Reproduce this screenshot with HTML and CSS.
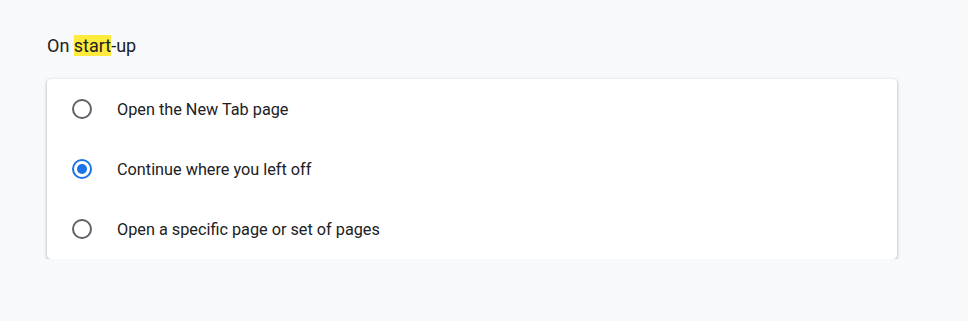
FILE: index.html
```html
<!DOCTYPE html>
<html>
<head>
<meta charset="utf-8">
<link rel="stylesheet" href="styles.css">
</head>
<body>
<main class="page">
  <h2 class="section-title">On <span class="hit">start</span>-up</h2>
  <div class="card" role="radiogroup">
    <label class="row">
      <span class="radio"></span>
      <span class="label">Open the New Tab page</span>
    </label>
    <label class="row">
      <span class="radio checked"></span>
      <span class="label">Continue where you left off</span>
    </label>
    <label class="row">
      <span class="radio"></span>
      <span class="label">Open a specific page or set of pages</span>
    </label>
  </div>
</main>
</body>
</html>
```

FILE: styles.css
```css
html, body {
  margin: 0;
  padding: 0;
  background: #f8f9fa;
  font-family: Roboto, "Liberation Sans", sans-serif;
  color: #202124;
}
.page {
  padding: 33px 71px 0 47px;
}
.section-title {
  margin: 0 0 20px 0;
  font-size: 18px;
  font-weight: 400;
  line-height: 26px;
}
.hit {
  background: #ffeb3b;
}
.card {
  background: #fff;
  border-radius: 4px;
  box-shadow: 0 1px 2px 0 rgba(60,64,67,.3), 0 1px 3px 1px rgba(60,64,67,.15);
  display: flex;
  flex-direction: column;
}
.row {
  display: flex;
  align-items: center;
  height: 60px;
  padding-left: 25px;
  font-size: 16.25px;
}
.radio {
  box-sizing: border-box;
  width: 20px;
  height: 20px;
  border: 2px solid #5f6368;
  border-radius: 50%;
  display: flex;
  align-items: center;
  justify-content: center;
  margin-right: 25px;
  flex: none;
}
.radio.checked {
  border-color: #1a73e8;
}
.radio.checked::after {
  content: "";
  width: 10px;
  height: 10px;
  border-radius: 50%;
  background: #1a73e8;
}
```
